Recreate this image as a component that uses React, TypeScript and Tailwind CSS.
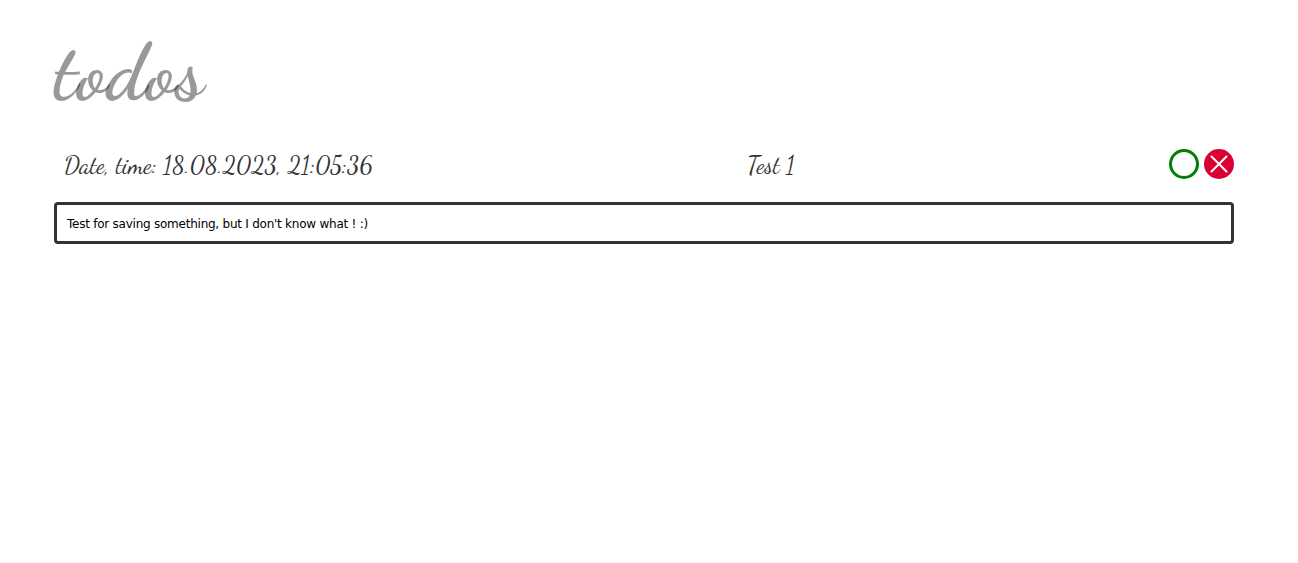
const scriptFont = "font-['Dancing_Script','Liberation_Serif',cursive]";

export default function App() {
  return (
    <div className="min-h-[563px] bg-white px-[54px] pt-[30px] pr-[64px]">
      <h1 className={`${scriptFont} h-[86px] text-[80px] leading-[85px] font-bold text-black/40`}>todos</h1>

      <div className="mt-[33px] flex items-center justify-between pl-[10px]">
        <span className={`${scriptFont} h-[30px] text-[24px] leading-[34px] text-[#333]`}>Date, time: 18.08.2023, 21:05:36</span>
        <span className={`${scriptFont} h-[30px] text-[24px] leading-[34px] text-[#333]`}>Test 1</span>
        <div className="flex gap-[5px]">
          <button className="h-[30px] w-[30px] rounded-full border-[3px] border-[#008000] bg-white" />
          <button className="flex h-[30px] w-[30px] items-center justify-center rounded-full bg-[#dc0032]">
            <svg width="20" height="20" viewBox="0 0 20 20" stroke="#fff" strokeWidth="2" strokeLinecap="round">
              <path d="M2.5 2.5 17.5 17.5M17.5 2.5 2.5 17.5" />
            </svg>
          </button>
        </div>
      </div>

      <div className="mt-[23px] h-[42px] rounded-[4px] border-[3px] border-[#333] px-[10px] font-['DejaVu_Sans',sans-serif] text-[12px] leading-[38px] tracking-[-0.24px] text-black">
        Test for saving something, but I don't know what ! :)
      </div>
    </div>
  );
}
